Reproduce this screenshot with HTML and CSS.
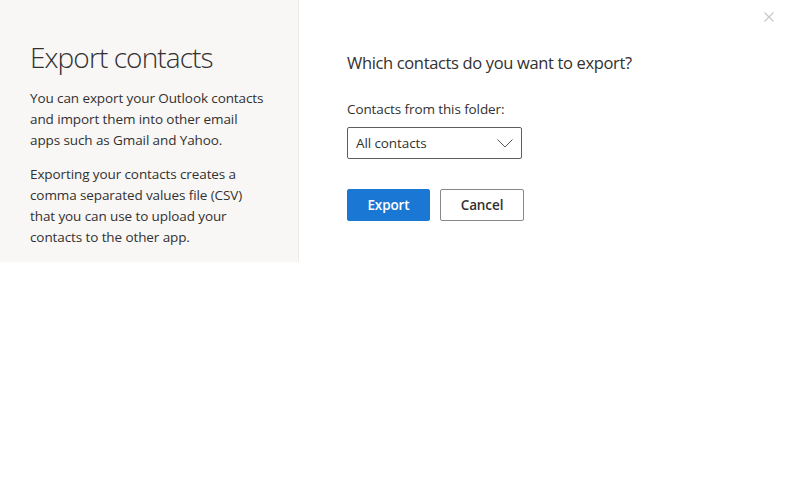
FILE: index.html
```html
<!DOCTYPE html>
<html>
<head>
<meta charset="utf-8">
<link rel="stylesheet" href="styles.css">
</head>
<body>
<div class="dialog">
  <aside class="side">
    <h1 class="title">Export contacts</h1>
    <p class="desc">You can export your Outlook contacts and import them into other email apps such as Gmail and Yahoo.</p>
    <p class="desc">Exporting your contacts creates a comma separated values file (CSV) that you can use to upload your contacts to the other app.</p>
  </aside>
  <main class="content">
    <h2 class="question">Which contacts do you want to export?</h2>
    <div class="label">Contacts from this folder:</div>
    <div class="select">
      <span>All contacts</span>
      <svg class="chev" width="16" height="9" viewBox="0 0 16 9"><path d="M0.5 0.5 L8 8 L15.5 0.5" fill="none" stroke="#555" stroke-width="1"/></svg>
    </div>
    <div class="actions">
      <button class="btn primary">Export</button>
      <button class="btn secondary">Cancel</button>
    </div>
  </main>
  <button class="close" aria-label="Close">
    <svg width="10" height="10" viewBox="0 0 10 10"><path d="M0.5 0.5 L9.5 9.5 M9.5 0.5 L0.5 9.5" stroke="#c8c8c8" stroke-width="1.2"/></svg>
  </button>
</div>
</body>
</html>
```
FILE: styles.css
```css
* { box-sizing: border-box; }
html, body { margin: 0; padding: 0; background: #fff; }
body {
  font-family: "Open Sans", "Noto Sans", sans-serif;
  color: #323130;
  width: 796px;
  height: 491px;
  overflow: hidden;
}
.dialog {
  position: relative;
  display: flex;
  align-items: flex-start;
}
.side {
  width: 299px;
  height: 262px;
  background: #f8f7f6;
  border-right: 1px solid #edebe9;
  padding: 38px 0 0 30px;
}
.title {
  margin: 0 0 12px;
  font-weight: 300;
  font-size: 28px;
  line-height: 38px;
  letter-spacing: -0.9px;
  color: #323130;
}
.desc {
  width: 238px;
  margin: 0 0 13px;
  font-size: 13.5px;
  line-height: 21px;
  letter-spacing: -0.1px;
  color: #323130;
}
.content {
  padding: 51px 0 0 48px;
}
.question {
  margin: 0 0 24px;
  font-weight: 400;
  font-size: 16.5px;
  line-height: 24px;
  letter-spacing: -0.35px;
  color: #323130;
}
.label {
  font-size: 13.5px;
  line-height: 20px;
  letter-spacing: -0.1px;
  margin-bottom: 8px;
}
.select {
  width: 175px;
  height: 32px;
  border: 1px solid #605e5c;
  border-radius: 2px;
  display: flex;
  align-items: center;
  justify-content: space-between;
  padding: 0 8px 0 8px;
  font-size: 13.5px;
  letter-spacing: -0.1px;
}
.chev { margin-top: 1px; }
.actions {
  display: flex;
  gap: 10px;
  margin-top: 30px;
}
.btn {
  font-family: inherit;
  font-size: 13.5px;
  font-weight: 600;
  height: 32px;
  border-radius: 2px;
  padding: 0;
  cursor: pointer;
  letter-spacing: -0.1px;
}
.primary {
  width: 83px;
  background: #1a78d4;
  border: 1px solid #1a78d4;
  color: #fff;
}
.secondary {
  width: 84px;
  background: #fff;
  border: 1px solid #8a8886;
  color: #323130;
}
.close {
  position: absolute;
  top: 12px;
  right: 22px;
  border: 0;
  background: transparent;
  padding: 0;
  width: 10px;
  height: 10px;
  display: flex;
}
```
